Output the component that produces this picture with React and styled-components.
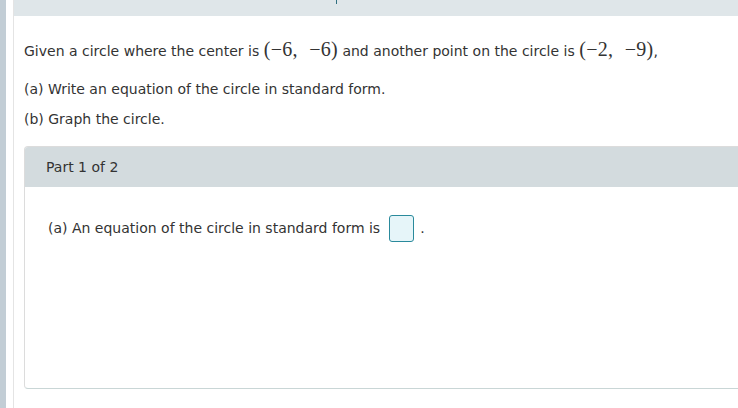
import React from 'react'
import styled, { createGlobalStyle } from 'styled-components';

const Global = createGlobalStyle`
  html, body { margin: 0; padding: 0; background: #fff; }
  body { font-family: "DejaVu Sans", Verdana, sans-serif; color: #333; }
`

const Page = styled.div`
  display: flex;
  height: 408px;
  overflow: hidden;
`

const Stripe = styled.div`
  width: 6px;
  flex: none;
  background: #c2cdd5;
  margin-right: 7px;
`

const Main = styled.div`
  flex: 1;
  border-left: 1px solid #e4e4e4;
  display: flex;
  flex-direction: column;
  min-width: 0;
`

const TopBand = styled.div`
  height: 16px;
  background: #dfe6e9;
  position: relative;
  &::after {
    content: '';
    position: absolute;
    left: 322px;
    top: 0;
    width: 1px;
    height: 4px;
    background: #2f6f80;
  }
`

const Content = styled.div`
  padding: 15px 0 0 10px;
`

const Line = styled.p`
  margin: 0 0 ${(p) => p.tall ? '5px' : '0'};
  font-size: 14px;
  line-height: ${(p) => p.tall ? '36px' : '30px'};
  white-space: nowrap;
`

const Math = styled.span`
  font-family: "Liberation Serif", "Times New Roman", serif;
  font-size: 20px;
  word-spacing: 6px;
  letter-spacing: 0.3px;
`

const Card = styled.div`
  margin-top: 12px;
  margin-right: -4px;
  border: 1px solid #dcdcdc;
  border-bottom-color: #c9d6d6;
  border-radius: 4px;
  overflow: hidden;
`

const CardHeader = styled.div`
  height: 40px;
  background: #d3dbde;
  padding-left: 21px;
  display: flex;
  align-items: center;
  font-size: 14px;
`

const CardBody = styled.div`
  height: 201px;
  padding: 28px 0 0 23px;
  box-sizing: border-box;
  font-size: 14px;
  display: flex;
  align-items: flex-start;
`

const Answer = styled.span`
  display: inline-flex;
  align-items: center;
  gap: 9px;
  line-height: 27px;
`

const InputBox = styled.span`
  display: inline-block;
  width: 23px;
  height: 25px;
  border: 1px solid #2a8a9c;
  border-radius: 3px;
  background: #e6f5f9;
`

const App = () => {
  return (
    <>
      <Global />
      <Page>
        <Stripe />
        <Main>
          <TopBand />
          <Content>
            <Line tall>
              Given a circle where the center is <Math>(−6, −6)</Math> and another point on the circle is <Math>(−2, −9)</Math>,
            </Line>
            <Line>(a) Write an equation of the circle in standard form.</Line>
            <Line>(b) Graph the circle.</Line>
            <Card>
              <CardHeader>Part 1 of 2</CardHeader>
              <CardBody>
                <Answer>
                  (a) An equation of the circle in standard form is
                  <InputBox />
                  <span style={{ marginLeft: -3 }}>.</span>
                </Answer>
              </CardBody>
            </Card>
          </Content>
        </Main>
      </Page>
    </>
  )
}

export default App
